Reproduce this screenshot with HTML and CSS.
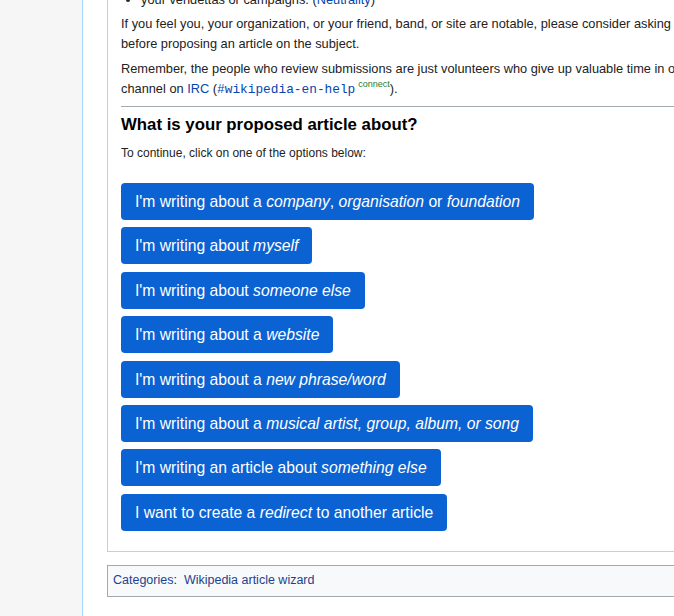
FILE: index.html
```html
<!DOCTYPE html>
<html lang="en">
<head>
  <meta charset="UTF-8">
  <title>Article wizard</title>
  <link rel="stylesheet" href="styles.css">
</head>
<body>
<div class="page">
  <div class="sidebar"></div>
  <div class="main">
    <div class="wizard">
      <ul class="reasons">
        <li>your vendettas or campaigns. (<a href="#">Neutrality</a>)</li>
      </ul>
      <p>If you feel you, your organization, or your friend, band, or site are notable, please consider asking someone else to write about it<br>
        before proposing an article on the subject.</p>
      <p>Remember, the people who review submissions are just volunteers who give up valuable time in order to help. If you need help, ask on the<br>
        channel on <a href="#">IRC</a> (<a href="#" class="irc">#wikipedia-en-help</a><sup class="connect">connect</sup>).</p>
      <hr class="rule">
      <h2 class="question">What is your proposed article about?</h2>
      <p class="hint">To continue, click on one of the options below:</p>

      <div class="options">
        <a class="option" href="#">I'm writing about a <i>company</i>, <i>organisation</i> or <i>foundation</i></a>
        <a class="option" href="#">I'm writing about <i>myself</i></a>
        <a class="option" href="#">I'm writing about <i>someone else</i></a>
        <a class="option" href="#">I'm writing about a <i>website</i></a>
        <a class="option" href="#">I'm writing about a <i>new phrase/word</i></a>
        <a class="option" href="#">I'm writing about a <i>musical artist, group, album, or song</i></a>
        <a class="option" href="#">I'm writing an article about <i>something else</i></a>
        <a class="option" href="#">I want to create a <i>redirect</i> to another article</a>
      </div>
    </div>

    <div class="catlinks">
      <a href="#">Categories</a>:&nbsp; <a href="#">Wikipedia article wizard</a>
    </div>
  </div>
</div>
</body>
</html>
```

FILE: styles.css
```css
body {
  margin: 0;
  overflow: hidden;
  background: #ffffff;
  font-family: "Liberation Sans", Arial, sans-serif;
  color: #222222;
}
a {
  color: #0645ad;
  text-decoration: none;
}
.page {
  display: flex;
  width: 1200px;
  height: 616px;
}
.sidebar {
  width: 82px;
  background: #f6f6f6;
  border-right: 1px solid #a7d7f9;
  flex-shrink: 0;
}
.main {
  padding-left: 24px;
  width: 1000px;
}
.wizard {
  border-left: 1px solid #a7d7f9;
  border-bottom: 1px solid #a7d7f9;
  padding: 0 0 20px 13px;
  margin-top: -10px;
  font-size: 12.8px;
  line-height: 20px;
}
.reasons {
  margin: 0 0 4px 0;
  padding-left: 20px;
}
.reasons li {
  list-style: disc;
}
.wizard p {
  margin: 0 0 5px 0;
  white-space: nowrap;
}
.irc {
  font-family: "Liberation Mono", "Courier New", monospace;
  font-size: 12.8px;
}
.connect {
  color: #2a7d2a;
  font-size: 9px;
  line-height: 1;
  margin-left: 3px;
  vertical-align: 6px;
}
.rule {
  border: 0;
  border-top: 1px solid #a2a9b1;
  margin: 6px 0 0 0;
}
.question {
  font-size: 16.8px;
  font-weight: bold;
  margin: 7px 0 7px 0;
  line-height: 22px;
  color: #000000;
}
.hint {
  font-size: 12px;
}
.options {
  display: flex;
  flex-direction: column;
  align-items: flex-start;
  gap: 7.4px;
  margin-top: 20px;
}
.option {
  display: block;
  background: #0b62d3;
  color: #ffffff;
  font-size: 15.7px;
  line-height: 37px;
  height: 37px;
  padding: 0 14px;
  border-radius: 4px;
}
.option i {
  font-style: italic;
}
.catlinks {
  margin-top: 13px;
  border: 1px solid #a2a9b1;
  background: #f8f9fa;
  padding: 0 5px;
  height: 30px;
  line-height: 29px;
  font-size: 12.5px;
}
.catlinks a {
  color: #1f3f8f;
}
```
